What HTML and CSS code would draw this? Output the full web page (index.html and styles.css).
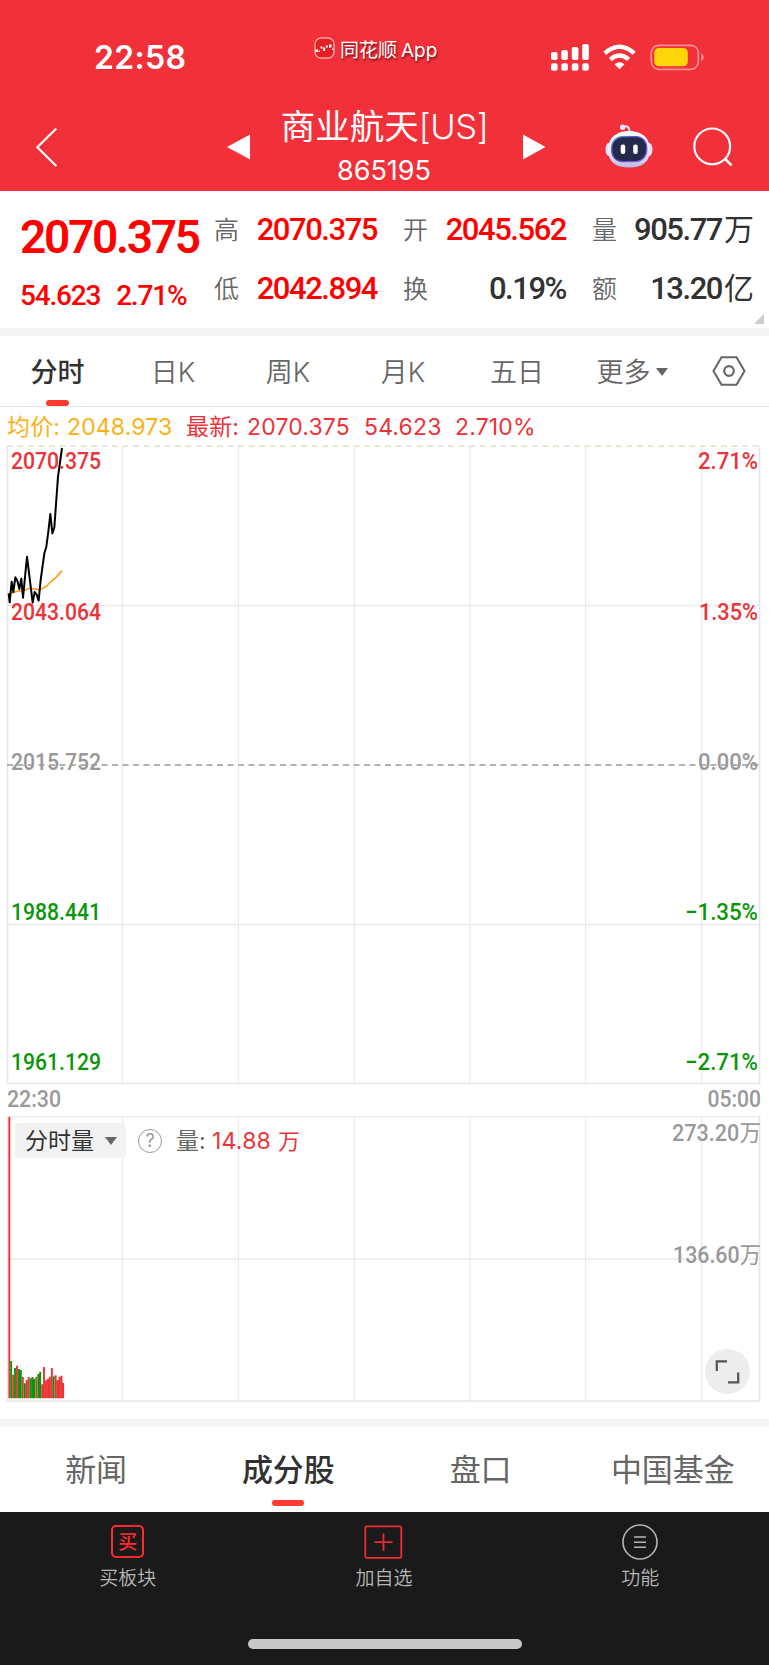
FILE: index.html
```html
<!DOCTYPE html>
<html lang="zh-CN">
<head>
<meta charset="utf-8">
<title>商业航天[US]</title>
<link rel="stylesheet" href="styles.css">
</head>
<body>
<header class="header">
  <div class="status">
    <span class="clock">22:58</span>
    <span class="source">
      <svg width="21" height="22" viewBox="0 0 21 22"><rect x="1" y="1" width="19" height="20" rx="6" fill="#e31f24" stroke="#f9a3a3" stroke-width="1.5"/><g fill="#fff"><rect x="1.500" y="12.500" width="2.500" height="2.500"/><rect x="4.500" y="13.500" width="1.500" height="1.500"/><rect x="6.500" y="9.500" width="2" height="2"/><rect x="9.200" y="10.500" width="2" height="3.500"/><rect x="11.800" y="8.500" width="2" height="2"/><rect x="15" y="7.500" width="2.500" height="3"/><rect x="18" y="11.500" width="1.500" height="1.500"/></g></svg>
      <span class="brand">同花顺<span class="app">App</span></span>
    </span>
    <svg class="sys" width="154" height="28" viewBox="551 44 154 28">
      <g fill="#fff">
        <rect x="551" y="52" width="6.6" height="8" rx="2"/><rect x="561.3" y="50" width="6.6" height="10" rx="2"/><rect x="571.8" y="47" width="6.6" height="13" rx="2"/><rect x="582.2" y="44" width="6.6" height="16" rx="2"/>
        <rect x="551" y="63.3" width="6.6" height="7.4" rx="2"/><rect x="561.3" y="63.3" width="6.6" height="7.4" rx="2"/><rect x="571.8" y="63.3" width="6.6" height="7.4" rx="2"/><rect x="582.2" y="63.3" width="6.6" height="7.4" rx="2"/>
        <path d="M619.500 69.300L614.500 64.300Q619.500 60 624.500 64.300Z"/>
      </g>
      <g fill="none" stroke="#fff" stroke-width="4.300"><path d="M604.800 53.300Q619.500 40.300 634.200 53.300"/><path d="M610.300 59.300Q619.500 51.500 628.700 59.300"/></g>
      <rect x="651.300" y="45.300" width="47" height="24" rx="7.500" fill="none" stroke="#f98c90" stroke-width="1.700"/>
      <rect x="654.300" y="48" width="33.500" height="18.300" rx="4.500" fill="#ffd60a"/>
      <path d="M701.200 53.500q2.600.8 2.600 3.700t-2.600 3.700z" fill="#f98c90"/>
    </svg>
  </div>
  <div class="titlebar">
    <svg class="back" width="24" height="42" viewBox="34 126 24 42"><path d="M56.300 128.500L37.300 147.200L56.300 166" fill="none" stroke="#fff" stroke-width="2.200"/></svg>
    <svg class="prev" width="24" height="26" viewBox="227 133.500 24 26"><path d="M227 146.500L250 134V159Z" fill="#fff"/></svg>
    <div class="title"><div class="name">商业航天<span class="us">[US]</span></div><div class="code">865195</div></div>
    <svg class="next" width="24" height="26" viewBox="522 133.500 24 26"><path d="M545.500 146.500L523 134V159Z" fill="#fff"/></svg>
    <svg class="robot" width="48" height="46" viewBox="605 123 48 46">
      <defs><linearGradient id="shell" x1="0" y1="0" x2="0" y2="1"><stop offset="0" stop-color="#fff"/><stop offset=".65" stop-color="#e2e3f7"/><stop offset="1" stop-color="#b8bce6"/></linearGradient>
      <linearGradient id="rim" x1="0" y1="0" x2="1" y2="1"><stop offset="0" stop-color="#55a6ea"/><stop offset=".5" stop-color="#5b35ad"/><stop offset="1" stop-color="#9a71f3"/></linearGradient></defs>
      <path d="M622 127q8-3 7.500 6" fill="none" stroke="#e3e2f4" stroke-width="2"/><circle cx="622.600" cy="127.300" r="2.700" fill="#e4e5fa"/>
      <ellipse cx="608.500" cy="149.500" rx="3" ry="6.500" fill="#dfe0f6"/><ellipse cx="649.500" cy="149.500" rx="3" ry="6.500" fill="#dfe0f6"/>
      <path d="M629 131c15 0 21 9 21 19 0 12-8 17.500-21 17.500S608 162 608 150c0-10 6-19 21-19z" fill="url(#shell)"/>
      <rect x="611.700" y="136.600" width="35" height="25" rx="11" fill="#252a4c" stroke="url(#rim)" stroke-width="1.300"/>
      <rect x="620.700" y="144.500" width="4.500" height="9.600" rx="2" fill="#fff"/><rect x="633.200" y="144.500" width="4.500" height="9.600" rx="2" fill="#fff"/>
    </svg>
    <svg class="search" width="40" height="40" viewBox="693 127 40 40"><circle cx="712.200" cy="146.400" r="17.900" fill="none" stroke="#fff" stroke-width="2.200"/><path d="M724.800 158.500L731.500 165.300" stroke="#fff" stroke-width="2.500"/></svg>
  </div>
</header>

<section class="quote">
  <div class="main">
    <div class="price">2070.375</div>
    <div class="change"><span>54.623</span><span>2.71%</span></div>
  </div>
  <dl class="stats">
    <dt>高</dt><dd class="up">2070.375</dd><dt>开</dt><dd class="up">2045.562</dd><dt>量</dt><dd>905.77<b>万</b></dd>
    <dt>低</dt><dd class="up">2042.894</dd><dt>换</dt><dd>0.19%</dd><dt>额</dt><dd>13.20<b>亿</b></dd>
  </dl>
  <i class="corner"></i>
</section>

<nav class="periods">
  <span class="active">分时</span><span>日K</span><span>周K</span><span>月K</span><span>五日</span>
  <span>更多<svg class="caret" width="12" height="8" viewBox="0 0 12 8"><path d="M0 0H12L6 8Z" fill="#666"/></svg></span>
  <span class="gear"><svg width="34" height="30" viewBox="0 0 34 30"><path d="M9.500 1.300H24.500L32.500 15L24.500 28.700H9.500L1.500 15Z" fill="none" stroke="#666" stroke-width="2"/><circle cx="17" cy="15" r="4.800" fill="none" stroke="#666" stroke-width="2.200"/></svg></span>
</nav>

<div class="legend">
  <span class="avg">均价:</span><span class="avg">2048.973</span><span>最新:</span><span>2070.375</span><span>54.623</span><span>2.710%</span>
</div>

<svg class="chart" width="769" height="671" viewBox="0 445 769 671">
  <g class="grid"><path d="M7 605.500H760M7 924.500H760M122.500 446V1084M238.500 446V1084M354.500 446V1084M470 446V1084M585.500 446V1084M701.500 446V1084"/></g>
  <path class="frame" d="M7.500 446V1083.500H759.500V446"/>
  <path d="M7 446.300H760" stroke="#e8dccb" stroke-width="1.500" stroke-dasharray="6 4.500"/>
  <path d="M7 765H760" stroke="#999" stroke-width="1.300" stroke-dasharray="6 4.500"/>
  <g class="axis">
    <g fill="#eb3339"><text x="11" y="469" textLength="90" lengthAdjust="spacingAndGlyphs">2070.375</text><text x="11" y="619.500" textLength="90" lengthAdjust="spacingAndGlyphs">2043.064</text><text x="698" y="469" textLength="60" lengthAdjust="spacingAndGlyphs">2.71%</text><text x="699" y="619.500" textLength="59" lengthAdjust="spacingAndGlyphs">1.35%</text></g>
    <g fill="#999"><text x="11" y="769.500" textLength="90" lengthAdjust="spacingAndGlyphs">2015.752</text><text x="698" y="769.500" textLength="60" lengthAdjust="spacingAndGlyphs">0.00%</text></g>
    <g fill="#0a960a"><text x="11" y="919.500" textLength="90" lengthAdjust="spacingAndGlyphs">1988.441</text><text x="11" y="1070" textLength="90" lengthAdjust="spacingAndGlyphs">1961.129</text><text x="685" y="919.500" textLength="73" lengthAdjust="spacingAndGlyphs">−1.35%</text><text x="685" y="1070" textLength="73" lengthAdjust="spacingAndGlyphs">−2.71%</text></g>
    <g fill="#999"><text x="7" y="1107" textLength="54" lengthAdjust="spacingAndGlyphs">22:30</text><text x="707.500" y="1107" textLength="53.500" lengthAdjust="spacingAndGlyphs">05:00</text></g>
  </g>
  <g transform="translate(0 430) scale(.33333)" fill="none" stroke-linejoin="round">
    <polyline stroke="#f9a21b" stroke-width="5" points="25,492 50,484 70,482 90,475 110,478 125,477 140,468 155,453 168,442 186,422"/>
    <polyline stroke="#000" stroke-width="6" points="26,490 29,517 35,455 40,486 46,442 52,452 58,477 64,446 69,503 81,380 98,518 104,486 110,494 116,512 122,450 133,370 139,350 145,305 151,252 157,310 163,292 174,140 186,54"/>
  </g>
</svg>

<section class="volume">
  <svg width="769" height="303" viewBox="0 1116 769 303">
    <g class="grid"><path d="M7 1116.500H760M7 1259H760M122.500 1116V1401M238.500 1116V1401M354.500 1116V1401M470 1116V1401M585.500 1116V1401M701.500 1116V1401"/></g>
    <path class="frame" d="M7.500 1116V1401H759.500V1116"/>
    <g transform="translate(0 1340) scale(.33333)" stroke-width="5.700">
      <path stroke="#eb3339" d="M28 175V-669M39.500 175V104M51 175V77M68.500 175V111M80 175V120M86 175V111M109 175V110M126.500 175V133M132 175V81M138 175V121M144 175V116M149.500 175V110M155.500 175V84M167 175V106M173 175V121M178.500 175V110M184.500 175V107M189.500 175V129"/>
      <path stroke="#0a960a" d="M33.500 175V63M45 175V84M57 175V87M62.500 175V90M74.500 175V130M91.500 175V115M97.500 175V111M103 175V116M115 175V102M120.500 175V95M161 175V109"/>
    </g>
    <g class="axis" fill="#999"><text x="672" y="1141" textLength="89" lengthAdjust="spacingAndGlyphs">273.20<tspan class="wan">万</tspan></text><text x="673" y="1263" textLength="88" lengthAdjust="spacingAndGlyphs">136.60<tspan class="wan">万</tspan></text></g>
  </svg>
  <div class="volbar">
    <span class="pick">分时量<svg width="12" height="8" viewBox="0 0 12 8"><path d="M0 0H12L6 8Z" fill="#666"/></svg></span>
    <span class="help">?</span><span class="vlabel">量:</span><span class="vnum">14.88</span><span class="vunit">万</span>
  </div>
  <svg class="expand" width="45" height="45" viewBox="0 0 45 45"><circle cx="22.500" cy="22.500" r="22.500" fill="#ededed"/><path d="M11.800 22V12.400H22M23 33.300H33.200V23.500" fill="none" stroke="#555" stroke-width="2.200"/></svg>
</section>

<nav class="tabs"><span>新闻</span><span class="active">成分股</span><span>盘口</span><span>中国基金</span></nav>

<footer class="bottom">
  <div class="actions">
    <div><span class="buy">买</span>买板块</div>
    <div><svg width="39" height="36" viewBox="0 0 39 36"><rect x="1.300" y="2.300" width="36" height="31.600" rx="1.500" fill="none" stroke="#f02c30" stroke-width="1.800"/><path d="M19.500 9.500V27M10.500 18.200H28.500" stroke="#f02c30" stroke-width="1.800"/></svg>加自选</div>
    <div><svg width="36" height="36" viewBox="0 0 36 36"><circle cx="18" cy="18" r="17" fill="none" stroke="#b5b5b5" stroke-width="1.600"/><path d="M12 13H24M12 18.200H24M12 23.200H24" stroke="#b5b5b5" stroke-width="1.600"/></svg>功能</div>
  </div>
  <div class="home"></div>
</footer>
</body>
</html>
```

FILE: styles.css
```css
* { box-sizing: border-box; }
body { margin: 0; width: 769px; height: 1665px; overflow: hidden; background: #fff; color: #323232; font-family: Inter, "Noto Sans CJK SC", sans-serif; }
svg { display: block; flex: none; }

.header { height: 191px; background: #f13039; color: #fff; }
.status { height: 96px; display: flex; align-items: flex-start; }
.clock { width: 220px; margin-left: 94px; padding-top: 38px; font-size: 32px; line-height: 40px; font-weight: 600; letter-spacing: .3px; }
.source { display: flex; gap: 5px; width: 237px; padding-top: 37px; font-size: 19px; line-height: 24px; white-space: nowrap; text-shadow: 1px 2px 2px rgba(70,0,0,.65); }
.brand { padding-top: 1.500px; }
.app { margin-left: 4px; }
.sys { margin-top: 44px; }
.titlebar { height: 95px; display: flex; align-items: flex-start; }
.back { margin: 30px 0 0 34px; }
.prev { margin: 37.5px 0 0 169px; }
.title { width: 271px; text-align: center; }
.name { margin-top: 9px; padding-right: 4px; font-size: 34.500px; line-height: 44px; white-space: nowrap; }
.us { letter-spacing: -.400px; font-weight: 350; }
.code { padding-right: 5px; font-size: 27px; line-height: 32px; letter-spacing: 0; margin-top: 6px; }
.next { margin-top: 37.5px; }
.robot { margin: 27px 0 0 59px; }
.search { margin: 31px 0 0 40px; }

.quote { position: relative; height: 145px; border-bottom: 8px solid #f4f4f4; display: flex; font-family: Roboto, "Noto Sans CJK SC", sans-serif; }
.main { width: 214px; padding: 18px 0 0 20px; color: #f00; white-space: nowrap; }
.price { font-size: 46px; line-height: 56px; font-weight: 600; letter-spacing: -2.300px; }
.change { display: flex; gap: 16px; margin-top: 14px; font-size: 28px; line-height: 34px; font-weight: 500; letter-spacing: -1.200px; }
.stats { margin: 17px 0 0; display: grid; grid-template-columns: 26px 137px 51px 138px 51px 137px; grid-template-rows: 59px 59px; line-height: 44px; }
.stats dt { padding-top: 1px; font-size: 25px; font-weight: 350; color: #666; text-align: right; }
.stats dt:first-child, .stats dt:nth-of-type(4) { text-align: left; }
.stats dd { margin: 0; text-align: right; font-size: 31px; font-weight: 500; letter-spacing: -1.450px; white-space: nowrap; }
.stats dd.up { color: #f00; }
.stats b { font-size: 30px; font-weight: 400; letter-spacing: 0; margin-left: 2px; line-height: 20px; }
.corner { position: absolute; right: 5px; bottom: 4px; border-left: 10px solid transparent; border-bottom: 10px solid #ccc; }

.periods { height: 71px; display: grid; grid-template-columns: 115px 116px 114px 116px 112px 118px 75px; border-bottom: 1px solid #e6e6e6; font-size: 27px; line-height: 38px; color: #666; }
.periods span { position: relative; display: flex; align-items: center; justify-content: center; padding-top: 3px; font-weight: 350; }
.periods .active { color: #323232; font-weight: 500; }
.periods .active::after { content: ""; position: absolute; bottom: 0; left: 46px; width: 23px; height: 6px; border-radius: 3px; background: #ff3b30; }
.periods .gear { padding-top: 0; }
.caret { margin: -2px 0 0 5px; }

.legend { height: 38px; padding-left: 7px; display: grid; grid-template-columns: 60px 119px 61px 117px 91px 90px; font-size: 23px; line-height: 40px; letter-spacing: .15px; color: #eb3339; white-space: nowrap; }
.legend .avg { color: #fdb015; }

.grid { fill: none; stroke: #ececec; stroke-width: 1.300; }
.frame { fill: none; stroke: #e6e6e6; stroke-width: 1.600; }
.axis { font: 500 23px Roboto, "Noto Sans CJK SC", sans-serif; }
.wan { font-family: "Noto Sans CJK SC", sans-serif; font-size: 23px; font-weight: 400; }

.volume { position: relative; height: 311px; border-bottom: 8px solid #f4f4f4; }
.volbar { position: absolute; left: 15px; top: 7px; height: 35px; display: flex; align-items: center; font-size: 23px; line-height: 35px; }
.pick { width: 111px; height: 35px; padding: 1px 0 0 10px; display: flex; align-items: center; gap: 11px; background: #f2f2f2; border-radius: 4px; }
.help { width: 24px; height: 24px; margin-left: 12px; border: 1.500px solid #999; border-radius: 50%; text-align: center; font-size: 18px; line-height: 22px; color: #999; }
.vlabel { margin-left: 14px; padding-top: 1px; width: 36px; color: #666; }
.vnum { padding-top: 1px; width: 66px; color: #eb3339; letter-spacing: .2px; }
.vunit { padding-top: 1px; color: #eb3339; font-size: 22px; }
.expand { position: absolute; left: 705px; top: 233px; }

.tabs { height: 85px; display: grid; grid-template-columns: repeat(4, 1fr); font-size: 31px; line-height: 82px; color: #666; text-align: center; font-family: "Noto Sans CJK SC", sans-serif; }
.tabs span { position: relative; }
.tabs .active { color: #323232; font-weight: 500; }
.tabs .active::after { content: ""; position: absolute; left: 80px; bottom: 6px; width: 32px; height: 6px; border-radius: 3px; background: #ff3b30; }

.bottom { height: 153px; background: #1a1a1a; color: #b5b5b5; }
.actions { height: 127px; padding-top: 12px; display: grid; grid-template-columns: repeat(3, 1fr); font: 350 19px/28px "Noto Sans CJK SC", sans-serif; }
.actions div { display: flex; flex-direction: column; align-items: center; gap: 3px; padding-right: 1px; }
.buy { width: 33px; height: 33px; margin: 1px 0 2px; border: 2px solid #ff2930; border-radius: 5px; text-align: center; font-size: 19px; line-height: 28px; font-weight: 500; color: #ff2930; }
.home { width: 274px; height: 10px; margin: 0 auto; border-radius: 5px; background: #c8c8c8; }
```
